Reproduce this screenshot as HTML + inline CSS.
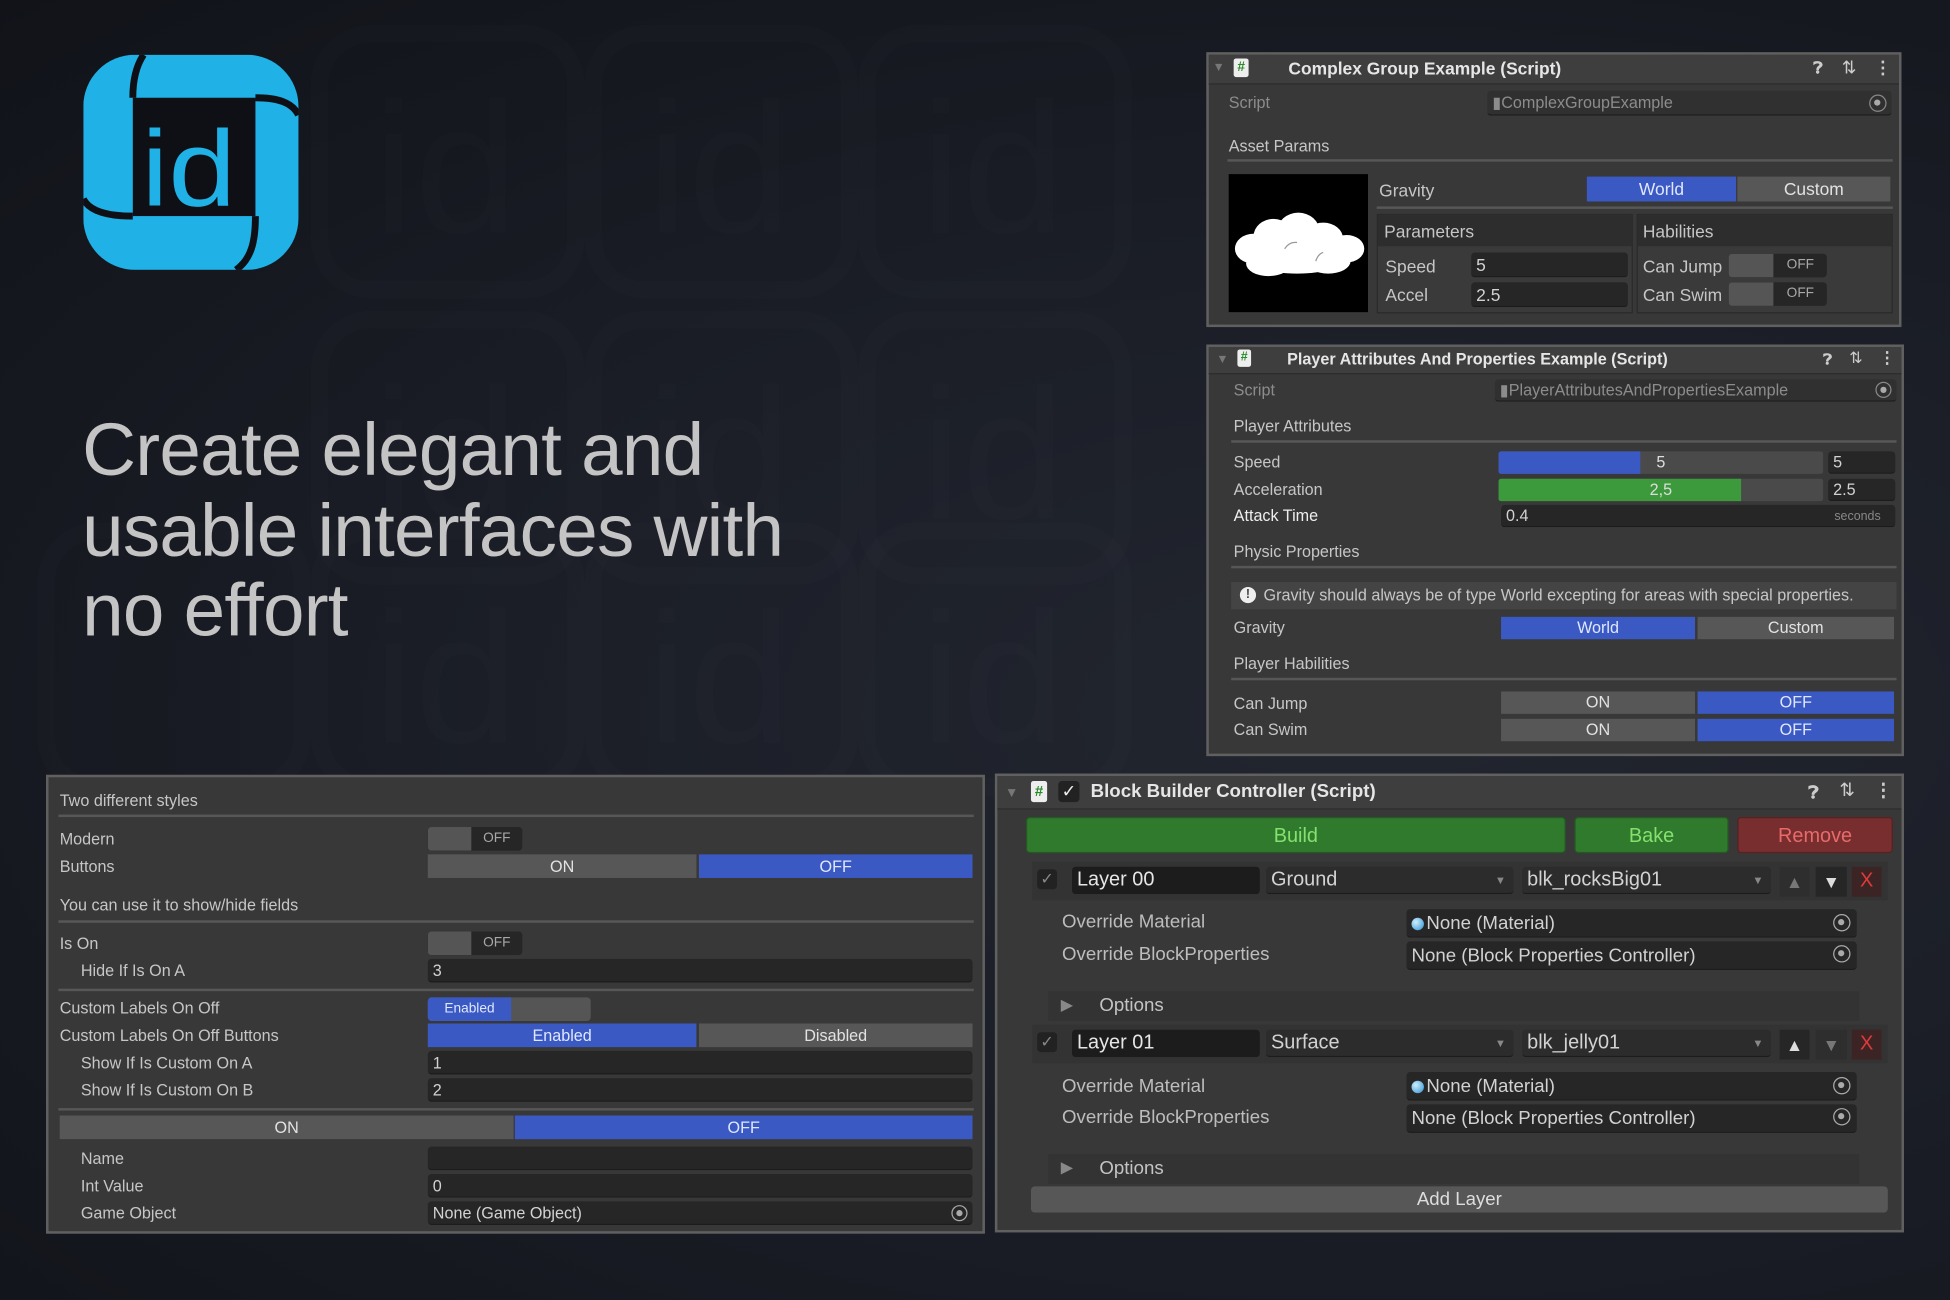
<!DOCTYPE html>
<html><head><meta charset="utf-8"><style>
*{margin:0;padding:0;box-sizing:border-box}
html,body{width:1950px;height:1300px;overflow:hidden;background:#161922}
#w{position:absolute;left:0;top:0;width:1568px;height:1045px;transform:scale(1.24362);transform-origin:0 0;
background:radial-gradient(ellipse at 70% 55%,#22262f 0%,#1b1e27 45%,#111319 100%);font-family:"Liberation Sans",sans-serif;overflow:hidden}
.a{position:absolute}
.t{position:absolute;font-size:13px;color:#c6c6c6;white-space:nowrap;line-height:16px}
.f{position:absolute;background:#262626;border-radius:3px;color:#d2d2d2;font-size:13px;padding-left:4px;white-space:nowrap;border-bottom:1px solid #1c1c1c}
.b{position:absolute;text-align:center;font-size:13px;white-space:nowrap}
.bl{background:#3b59c2;color:#dfe7ff}
.gy{background:#575757;color:#e2e2e2}
.ln{position:absolute;height:2px;background:#575757}
.p{position:absolute;background:#383838;border:2px solid #606060}
.hd{position:absolute;background:#3e3e3e;border-bottom:1px solid #2c2c2c}
.wm{position:absolute;color:rgba(255,255,255,0.012);font-size:150px;font-weight:normal;line-height:1}
.wmb{position:absolute;border:14px solid rgba(255,255,255,0.011);border-radius:48px}
.tg{position:absolute;height:19px;border-radius:3px;background:#262626;overflow:hidden}
.tg i{position:absolute;left:0;top:0;bottom:0;width:46%;background:#555}
.tg b{position:absolute;right:0;top:0;bottom:0;width:54%;font-size:11px;color:#a8a8a8;text-align:center;line-height:19px;font-weight:normal}
.tgt{position:absolute;width:14px;height:14px;border:1.5px solid #aaa;border-radius:50%}
.tgt:after{content:"";position:absolute;left:3px;top:3px;width:5px;height:5px;background:#aaa;border-radius:50%}
</style></head><body><div id="w">

<div class="wmb" style="left:250px;top:20px;width:220px;height:220px"></div>
<div class="wmb" style="left:470px;top:20px;width:220px;height:220px"></div>
<div class="wmb" style="left:690px;top:20px;width:220px;height:220px"></div>
<div class="wmb" style="left:250px;top:250px;width:220px;height:220px"></div>
<div class="wmb" style="left:470px;top:250px;width:220px;height:220px"></div>
<div class="wmb" style="left:690px;top:250px;width:220px;height:220px"></div>
<div class="wmb" style="left:30px;top:420px;width:220px;height:220px"></div>
<div class="wmb" style="left:250px;top:420px;width:220px;height:220px"></div>
<div class="wmb" style="left:470px;top:420px;width:220px;height:220px"></div>
<div class="wmb" style="left:690px;top:420px;width:220px;height:220px"></div>
<div class="wm" style="left:300px;top:60px">id</div>
<div class="wm" style="left:520px;top:60px">id</div>
<div class="wm" style="left:740px;top:60px">id</div>
<div class="wm" style="left:300px;top:290px">id</div>
<div class="wm" style="left:520px;top:290px">id</div>
<div class="wm" style="left:740px;top:290px">id</div>
<div class="wm" style="left:300px;top:470px">id</div>
<div class="wm" style="left:520px;top:470px">id</div>
<div class="wm" style="left:740px;top:470px">id</div>

<svg class="a" style="left:67px;top:44px" width="173" height="173" viewBox="0 0 100 100">
<rect x="0" y="0" width="100" height="100" rx="24" fill="#20b1e6"/>
<rect x="23" y="20" width="57" height="55" fill="#0e1016"/>
<path d="M28 0 C24 6 23 13 23 20" stroke="#0e1016" stroke-width="3.2" fill="none"/>
<path d="M80 20 C90 20 97 22 100 28" stroke="#0e1016" stroke-width="3.2" fill="none"/>
<path d="M23 75 C12 75 3 73 0 67" stroke="#0e1016" stroke-width="3.2" fill="none"/>
<path d="M80 75 C80 87 78 95 71 100" stroke="#0e1016" stroke-width="3.2" fill="none"/>
<text x="27" y="70" font-family="Liberation Sans,sans-serif" font-size="50" fill="#20b1e6" textLength="44" lengthAdjust="spacingAndGlyphs">id</text>
</svg>

<div class="a" style="left:66px;top:330px;font-size:60px;line-height:64.5px;color:#c4c4c4;letter-spacing:-0.6px;white-space:nowrap">Create elegant and<br>usable interfaces with<br>no effort</div>

<!-- Panel 1 -->
<div class="p" style="left:970px;top:42px;width:559px;height:221px"></div>
<div class="hd" style="left:972px;top:44px;width:555px;height:24px"></div>
<div class="t" style="left:975px;top:47px;color:#777;font-size:10px">▼</div>
<div class="a" style="left:992px;top:47px;width:12px;height:15px;background:#eee;border-radius:2px;color:#2a8a2a;font-size:11px;font-weight:bold;text-align:center;line-height:15px">#</div>
<div class="t" style="left:1036px;top:47px;font-size:14px;font-weight:bold;color:#e6e6e6">Complex Group Example (Script)</div>
<div class="t" style="left:1458px;top:47px;font-size:13px;color:#ccc;font-weight:bold">❓︎</div>
<div class="t" style="left:1481px;top:46px;font-size:14px;color:#ccc">⇅</div>
<div class="t" style="left:1507px;top:46px;font-size:14px;color:#ccc;font-weight:bold">⋮</div>
<div class="t" style="left:988px;top:75px;color:#8c8c8c">Script</div>
<div class="f" style="left:1196px;top:73px;width:325px;height:20px;line-height:20px;background:#303030;color:#8c8c8c">▮ComplexGroupExample</div>
<div class="tgt" style="left:1503px;top:76px;border-color:#888"></div>
<div class="t" style="left:988px;top:110px">Asset Params</div>
<div class="ln" style="left:987px;top:128px;width:535px"></div>
<div class="a" style="left:988px;top:140px;width:112px;height:111px;background:#000">
<svg width="112" height="111" viewBox="0 0 112 111"><g fill="#fff">
<ellipse cx="20" cy="60" rx="15" ry="12"/><ellipse cx="36" cy="50" rx="16" ry="14"/><ellipse cx="56" cy="46" rx="17" ry="15"/><ellipse cx="76" cy="52" rx="16" ry="13"/><ellipse cx="95" cy="60" rx="14" ry="11"/><ellipse cx="55" cy="66" rx="42" ry="14"/><ellipse cx="32" cy="72" rx="18" ry="10"/><ellipse cx="80" cy="70" rx="18" ry="10"/></g>
<path d="M45 60 q4 -6 10 -5 M70 70 q2 -6 6 -7" stroke="#999" stroke-width="1" fill="none"/></svg></div>
<div class="t" style="left:1109px;top:145px;font-size:14px">Gravity</div>
<div class="b bl" style="left:1276px;top:142px;width:120px;height:20px;line-height:20px;font-size:14px">World</div>
<div class="b gy" style="left:1397px;top:142px;width:123px;height:20px;line-height:20px;font-size:14px">Custom</div>
<div class="ln" style="left:1107px;top:166px;width:415px"></div>
<div class="a" style="left:1107px;top:172px;width:206px;height:80px;background:#3a3a3a;border:1px solid #2a2a2a"></div>
<div class="a" style="left:1108px;top:173px;width:204px;height:25px;background:#2d2d2d"></div>
<div class="a" style="left:1316px;top:172px;width:206px;height:80px;background:#3a3a3a;border:1px solid #2a2a2a"></div>
<div class="a" style="left:1317px;top:173px;width:204px;height:25px;background:#2d2d2d"></div>
<div class="t" style="left:1113px;top:178px;font-size:14px">Parameters</div>
<div class="t" style="left:1321px;top:178px;font-size:14px">Habilities</div>
<div class="t" style="left:1114px;top:206px;font-size:14px">Speed</div>
<div class="t" style="left:1114px;top:229px;font-size:14px">Accel</div>
<div class="f" style="left:1183px;top:203px;width:126px;height:20px;line-height:20px;font-size:14px">5</div>
<div class="f" style="left:1183px;top:227px;width:126px;height:20px;line-height:20px;font-size:14px">2.5</div>
<div class="t" style="left:1321px;top:206px;font-size:14px">Can Jump</div>
<div class="t" style="left:1321px;top:229px;font-size:14px">Can Swim</div>
<div class="tg" style="left:1390px;top:204px;width:79px"><i></i><b>OFF</b></div>
<div class="tg" style="left:1390px;top:227px;width:79px"><i></i><b>OFF</b></div>

<!-- Panel 2 -->
<div class="p" style="left:970px;top:277px;width:561px;height:331px"></div>
<div class="hd" style="left:972px;top:279px;width:557px;height:22px"></div>
<div class="t" style="left:978px;top:282px;color:#777;font-size:10px">▼</div>
<div class="a" style="left:995px;top:281px;width:11px;height:14px;background:#eee;border-radius:2px;color:#2a8a2a;font-size:10px;font-weight:bold;text-align:center;line-height:14px">#</div>
<div class="t" style="left:1035px;top:281px;font-size:13px;font-weight:bold;color:#e6e6e6">Player Attributes And Properties Example (Script)</div>
<div class="t" style="left:1466px;top:281px;font-size:12px;color:#ccc;font-weight:bold">❓︎</div>
<div class="t" style="left:1487px;top:280px;font-size:13px;color:#ccc">⇅</div>
<div class="t" style="left:1511px;top:280px;font-size:13px;color:#ccc;font-weight:bold">⋮</div>
<div class="t" style="left:992px;top:306px;color:#8c8c8c">Script</div>
<div class="f" style="left:1202px;top:305px;width:323px;height:18px;line-height:18px;background:#303030;color:#8c8c8c">▮PlayerAttributesAndPropertiesExample</div>
<div class="tgt" style="left:1508px;top:307px;border-color:#888;width:13px;height:13px"></div>
<div class="t" style="left:992px;top:335px">Player Attributes</div>
<div class="ln" style="left:990px;top:354px;width:535px"></div>
<div class="t" style="left:992px;top:364px">Speed</div>
<div class="a" style="left:1205px;top:363px;width:261px;height:18px;background:#4a4a4a;border-radius:2px"></div>
<div class="a" style="left:1205px;top:363px;width:114px;height:18px;background:#3b59c2;border-radius:2px 0 0 2px"></div>
<div class="b" style="left:1205px;top:364px;width:261px;line-height:16px;color:#ddd">5</div>
<div class="f" style="left:1470px;top:363px;width:54px;height:18px;line-height:18px">5</div>
<div class="t" style="left:992px;top:386px">Acceleration</div>
<div class="a" style="left:1205px;top:385px;width:261px;height:18px;background:#4a4a4a;border-radius:2px"></div>
<div class="a" style="left:1205px;top:385px;width:195px;height:18px;background:#3c9a3c;border-radius:2px 0 0 2px"></div>
<div class="b" style="left:1205px;top:386px;width:261px;line-height:16px;color:#ddd">2,5</div>
<div class="f" style="left:1470px;top:385px;width:54px;height:18px;line-height:18px">2.5</div>
<div class="t" style="left:992px;top:407px;color:#eee">Attack Time</div>
<div class="f" style="left:1207px;top:406px;width:317px;height:18px;line-height:18px">0.4</div>
<div class="t" style="left:1475px;top:408px;font-size:10px;color:#888">seconds</div>
<div class="t" style="left:992px;top:436px">Physic Properties</div>
<div class="ln" style="left:990px;top:455px;width:535px"></div>
<div class="a" style="left:990px;top:468px;width:535px;height:22px;background:#444"></div>
<div class="a" style="left:997px;top:472px;width:13px;height:13px;border-radius:50%;background:#eee;color:#444;font-size:10px;font-weight:bold;text-align:center;line-height:13px">!</div>
<div class="t" style="left:1016px;top:471px">Gravity should always be of type World excepting for areas with special properties.</div>
<div class="t" style="left:992px;top:497px">Gravity</div>
<div class="b bl" style="left:1207px;top:496px;width:156px;height:18px;line-height:18px">World</div>
<div class="b gy" style="left:1365px;top:496px;width:158px;height:18px;line-height:18px">Custom</div>
<div class="t" style="left:992px;top:526px">Player Habilities</div>
<div class="ln" style="left:990px;top:545px;width:535px"></div>
<div class="t" style="left:992px;top:558px">Can Jump</div>
<div class="b gy" style="left:1207px;top:556px;width:156px;height:18px;line-height:18px">ON</div>
<div class="b bl" style="left:1365px;top:556px;width:158px;height:18px;line-height:18px">OFF</div>
<div class="t" style="left:992px;top:579px">Can Swim</div>
<div class="b gy" style="left:1207px;top:578px;width:156px;height:18px;line-height:18px">ON</div>
<div class="b bl" style="left:1365px;top:578px;width:158px;height:18px;line-height:18px">OFF</div>

<!-- Panel 3 -->
<div class="p" style="left:37px;top:623px;width:755px;height:369px"></div>
<div class="t" style="left:48px;top:636px">Two different styles</div>
<div class="ln" style="left:47px;top:655px;width:736px"></div>
<div class="t" style="left:48px;top:667px">Modern</div>
<div class="tg" style="left:344px;top:665px;width:76px"><i></i><b>OFF</b></div>
<div class="t" style="left:48px;top:689px">Buttons</div>
<div class="b gy" style="left:344px;top:687px;width:216px;height:19px;line-height:19px">ON</div>
<div class="b bl" style="left:562px;top:687px;width:220px;height:19px;line-height:19px">OFF</div>
<div class="t" style="left:48px;top:720px">You can use it to show/hide fields</div>
<div class="ln" style="left:47px;top:740px;width:736px"></div>
<div class="t" style="left:48px;top:751px">Is On</div>
<div class="tg" style="left:344px;top:749px;width:76px"><i></i><b>OFF</b></div>
<div class="t" style="left:65px;top:773px">Hide If Is On A</div>
<div class="f" style="left:344px;top:771px;width:438px;height:19px;line-height:19px">3</div>
<div class="ln" style="left:47px;top:795px;width:736px"></div>
<div class="t" style="left:48px;top:803px">Custom Labels On Off</div>
<div class="a" style="left:344px;top:802px;width:131px;height:19px;background:#555;border-radius:3px"></div>
<div class="b bl" style="left:344px;top:802px;width:67px;height:19px;line-height:19px;font-size:11px;border-radius:3px 0 0 3px">Enabled</div>
<div class="t" style="left:48px;top:825px">Custom Labels On Off Buttons</div>
<div class="b bl" style="left:344px;top:823px;width:216px;height:19px;line-height:19px">Enabled</div>
<div class="b gy" style="left:562px;top:823px;width:220px;height:19px;line-height:19px">Disabled</div>
<div class="t" style="left:65px;top:847px">Show If Is Custom On A</div>
<div class="f" style="left:344px;top:845px;width:438px;height:19px;line-height:19px">1</div>
<div class="t" style="left:65px;top:869px">Show If Is Custom On B</div>
<div class="f" style="left:344px;top:867px;width:438px;height:19px;line-height:19px">2</div>
<div class="ln" style="left:47px;top:891px;width:736px"></div>
<div class="b gy" style="left:48px;top:897px;width:365px;height:19px;line-height:19px">ON</div>
<div class="b bl" style="left:414px;top:897px;width:368px;height:19px;line-height:19px">OFF</div>
<div class="t" style="left:65px;top:924px">Name</div>
<div class="f" style="left:344px;top:922px;width:438px;height:19px"></div>
<div class="t" style="left:65px;top:946px">Int Value</div>
<div class="f" style="left:344px;top:944px;width:438px;height:19px;line-height:19px">0</div>
<div class="t" style="left:65px;top:968px">Game Object</div>
<div class="f" style="left:344px;top:966px;width:438px;height:19px;line-height:19px">None (Game Object)</div>
<div class="tgt" style="left:765px;top:969px;width:13px;height:13px"></div>

<!-- Panel 4 -->
<div class="p" style="left:800px;top:622px;width:731px;height:369px"></div>
<div class="hd" style="left:802px;top:624px;width:727px;height:27px"></div>
<div class="t" style="left:808px;top:630px;color:#777;font-size:11px">▼</div>
<div class="a" style="left:829px;top:628px;width:13px;height:17px;background:#eee;border-radius:2px;color:#2a8a2a;font-size:12px;font-weight:bold;text-align:center;line-height:17px">#</div>
<div class="a" style="left:851px;top:628px;width:17px;height:17px;background:#222;border-radius:3px;color:#eee;font-size:14px;text-align:center;line-height:17px">✓</div>
<div class="t" style="left:877px;top:629px;font-size:15px;font-weight:bold;color:#e6e6e6">Block Builder Controller (Script)</div>
<div class="t" style="left:1454px;top:629px;font-size:14px;color:#ccc;font-weight:bold">❓︎</div>
<div class="t" style="left:1479px;top:628px;font-size:15px;color:#ccc">⇅</div>
<div class="t" style="left:1507px;top:628px;font-size:15px;color:#ccc;font-weight:bold">⋮</div>
<div class="b" style="left:825px;top:657px;width:434px;height:29px;line-height:29px;background:#2f7a2c;color:#86e06e;font-size:16px;border-radius:3px;border:1px solid #245a22">Build</div>
<div class="b" style="left:1266px;top:657px;width:124px;height:29px;line-height:29px;background:#2f7a2c;color:#86e06e;font-size:16px;border-radius:3px;border:1px solid #245a22">Bake</div>
<div class="b" style="left:1397px;top:657px;width:125px;height:29px;line-height:29px;background:#782e2e;color:#e86a6a;font-size:16px;border-radius:3px;border:1px solid #5a2020">Remove</div>

<div class="a" style="left:830px;top:693px;width:688px;height:31px;background:#333"></div>
<div class="a" style="left:834px;top:699px;width:16px;height:16px;background:#222;border-radius:3px;color:#888;font-size:13px;text-align:center;line-height:16px">✓</div>
<div class="f" style="left:862px;top:697px;width:151px;height:22px;line-height:22px;background:#1c1c1c;font-size:16px;color:#e6e6e6">Layer 00</div>
<div class="f" style="left:1018px;top:697px;width:199px;height:22px;line-height:22px;background:#2c2c2c;font-size:16px">Ground<span style="position:absolute;right:6px;font-size:9px;color:#888">▼</span></div>
<div class="f" style="left:1224px;top:697px;width:200px;height:22px;line-height:22px;background:#2c2c2c;font-size:16px">blk_rocksBig01<span style="position:absolute;right:6px;font-size:9px;color:#888">▼</span></div>
<div class="b" style="left:1431px;top:697px;width:24px;height:24px;line-height:24px;background:#2e2e2e;color:#777;font-size:14px">▲</div>
<div class="b" style="left:1460px;top:697px;width:25px;height:24px;line-height:24px;background:#262626;color:#ddd;font-size:14px">▼</div>
<div class="b" style="left:1489px;top:697px;width:24px;height:24px;line-height:24px;background:#3c2424;color:#e03a3a;font-size:16px">X</div>
<div class="t" style="left:854px;top:734px;font-size:15px;color:#bdbdbd">Override Material</div>
<div class="f" style="left:1131px;top:731px;width:362px;height:23px;line-height:23px;font-size:15px"><span style="display:inline-block;width:10px;height:10px;border-radius:50%;background:radial-gradient(circle at 35% 35%,#cfefff,#2a8fd0);vertical-align:-1px;margin-right:2px"></span>None (Material)</div>
<div class="tgt" style="left:1474px;top:735px"></div>
<div class="t" style="left:854px;top:760px;font-size:15px;color:#bdbdbd">Override BlockProperties</div>
<div class="f" style="left:1131px;top:757px;width:362px;height:23px;line-height:23px;font-size:15px">None (Block Properties Controller)</div>
<div class="tgt" style="left:1474px;top:760px"></div>
<div class="a" style="left:843px;top:797px;width:652px;height:24px;background:#333"></div>
<div class="t" style="left:853px;top:800px;font-size:13px;color:#888">▶</div>
<div class="t" style="left:884px;top:801px;font-size:15px;color:#c4c4c4">Options</div>

<div class="a" style="left:830px;top:824px;width:688px;height:31px;background:#333"></div>
<div class="a" style="left:834px;top:830px;width:16px;height:16px;background:#222;border-radius:3px;color:#888;font-size:13px;text-align:center;line-height:16px">✓</div>
<div class="f" style="left:862px;top:828px;width:151px;height:22px;line-height:22px;background:#1c1c1c;font-size:16px;color:#e6e6e6">Layer 01</div>
<div class="f" style="left:1018px;top:828px;width:199px;height:22px;line-height:22px;background:#2c2c2c;font-size:16px">Surface<span style="position:absolute;right:6px;font-size:9px;color:#888">▼</span></div>
<div class="f" style="left:1224px;top:828px;width:200px;height:22px;line-height:22px;background:#2c2c2c;font-size:16px">blk_jelly01<span style="position:absolute;right:6px;font-size:9px;color:#888">▼</span></div>
<div class="b" style="left:1431px;top:828px;width:24px;height:24px;line-height:24px;background:#262626;color:#ddd;font-size:14px">▲</div>
<div class="b" style="left:1460px;top:828px;width:25px;height:24px;line-height:24px;background:#2e2e2e;color:#777;font-size:14px">▼</div>
<div class="b" style="left:1489px;top:828px;width:24px;height:24px;line-height:24px;background:#3c2424;color:#e03a3a;font-size:16px">X</div>
<div class="t" style="left:854px;top:866px;font-size:15px;color:#bdbdbd">Override Material</div>
<div class="f" style="left:1131px;top:862px;width:362px;height:23px;line-height:23px;font-size:15px"><span style="display:inline-block;width:10px;height:10px;border-radius:50%;background:radial-gradient(circle at 35% 35%,#cfefff,#2a8fd0);vertical-align:-1px;margin-right:2px"></span>None (Material)</div>
<div class="tgt" style="left:1474px;top:866px"></div>
<div class="t" style="left:854px;top:891px;font-size:15px;color:#bdbdbd">Override BlockProperties</div>
<div class="f" style="left:1131px;top:888px;width:362px;height:23px;line-height:23px;font-size:15px">None (Block Properties Controller)</div>
<div class="tgt" style="left:1474px;top:891px"></div>
<div class="a" style="left:843px;top:928px;width:652px;height:24px;background:#333"></div>
<div class="t" style="left:853px;top:931px;font-size:13px;color:#888">▶</div>
<div class="t" style="left:884px;top:932px;font-size:15px;color:#c4c4c4">Options</div>
<div class="b gy" style="left:829px;top:954px;width:689px;height:21px;line-height:21px;font-size:15px;border-radius:3px;color:#ddd">Add Layer</div>

</div></body></html>
